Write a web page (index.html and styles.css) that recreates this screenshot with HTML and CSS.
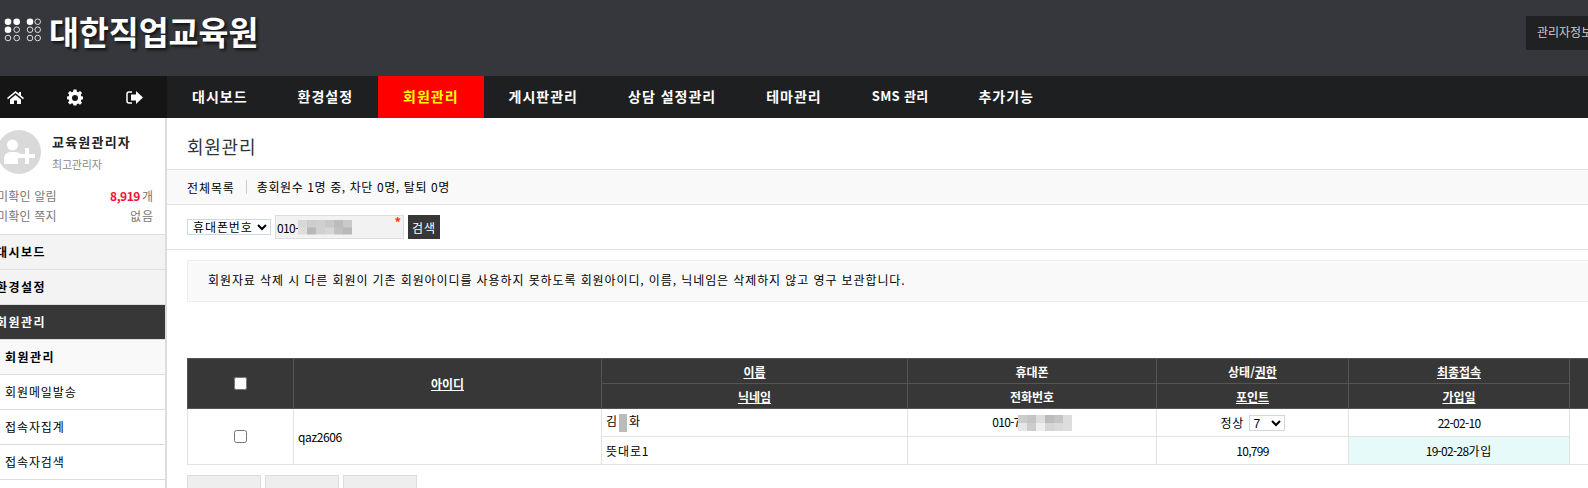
FILE: index.html
```html
<!DOCTYPE html>
<html lang="ko">
<head>
    <meta charset="utf-8">
    <title>회원관리</title>
    <link rel="stylesheet" href="styles.css">
</head>
<body>
    <header class="top">
        <div class="logo">
            <svg class="logo-dots" width="38" height="25" viewBox="0 0 38 25">
                <g fill="#fff">
                    <circle cx="4" cy="3.700" r="3.300"/><circle cx="12.700" cy="3.700" r="3.300"/>
                    <circle cx="4" cy="11.700" r="3.300"/><circle cx="26" cy="3.700" r="3.300"/>
                </g>
                <g fill="none" stroke="#ddd" stroke-width="1">
                    <circle cx="12.700" cy="11.700" r="2.800"/><circle cx="4" cy="20" r="2.800"/><circle cx="12.700" cy="20" r="2.800"/>
                    <circle cx="33.700" cy="3.700" r="2.800"/><circle cx="26" cy="11.700" r="2.800"/><circle cx="33.700" cy="11.700" r="2.800"/>
                    <circle cx="26" cy="20" r="2.800"/><circle cx="33.700" cy="20" r="2.800"/>
                </g>
            </svg>
            <span class="logo-text">대한직업교육원</span>
        </div>
        <a class="admin-info">관리자정보</a>
    </header>

    <nav class="gnb">
        <div class="quick">
            <svg width="17" height="13" viewBox="0 0 17 13"><path fill="#fff" d="M8.500 0 0 7l1 1.200 7.500-6.200L16 8.200 17 7l-3-2.500V1h-2v1.800zM3 8.500l5.500-4.500L14 8.500V13h-4V9.500H7V13H3z"/></svg>
            <svg width="16" height="17" viewBox="0 0 16 16"><path fill="#fff" fill-rule="evenodd" d="M6.500 0h3l.4 2.200 1.300.6L13.100 1.500 15 3.600l-1.300 1.800.6 1.300L16 7v2.800l-1.700.4-.6 1.300 1.300 1.800-2 2-1.800-1.300-1.300.6-.4 1.400h-3l-.4-1.700-1.300-.6-1.800 1.300-2-2 1.300-1.800-.6-1.300L0 9.800V7l1.700-.3.600-1.300L1 3.600l2-2.100 1.800 1.300 1.300-.6zM8 5.400a3 3 0 1 0 0 6 3 3 0 0 0 0-6z"/></svg>
            <svg width="17" height="13" viewBox="0 0 17 13"><path fill="#fff" d="M10 0l7 6.500-7 6.500V9.500H5v-6h5z"/><path fill="none" stroke="#fff" stroke-width="1.500" d="M6 1H3a2 2 0 0 0-2 2v7a2 2 0 0 0 2 2h3"/></svg>
        </div>
        <a class="gnb-item">대시보드</a>
        <a class="gnb-item">환경설정</a>
        <a class="gnb-item on">회원관리</a>
        <a class="gnb-item">게시판관리</a>
        <a class="gnb-item">상담 설정관리</a>
        <a class="gnb-item">테마관리</a>
        <a class="gnb-item sms">SMS 관리</a>
        <a class="gnb-item">추가기능</a>
    </nav>

    <div class="wrap">
        <aside class="side">
            <div class="profile">
                <svg class="avatar" width="44" height="44" viewBox="0 0 44 44">
                    <circle cx="22" cy="22" r="22" fill="#d9d9d9"/>
                    <circle cx="15.500" cy="15" r="5.500" fill="#fff"/>
                    <path fill="#fff" d="M7 34v-5c0-4 3-7 6-7h5c3 0 5 1 6 3v3h-3v6z"/>
                    <path fill="#fff" d="M28 18h4v6h6v4h-6v6h-4v-6h-6v-4h6z"/>
                </svg>
                <div>
                    <div class="profile-name">교육원관리자</div>
                    <div class="profile-role">최고관리자</div>
                </div>
            </div>
            <dl class="counts">
                <div class="count-row"><dt>미확인 알림</dt><dd><b>8,919</b> 개</dd></div>
                <div class="count-row"><dt>미확인 쪽지</dt><dd>없음</dd></div>
            </dl>
            <ul class="side-menu">
                <li class="main-link">대시보드</li>
                <li class="main-link">환경설정</li>
                <li class="main-link active">회원관리</li>
                <li class="sub-link current">회원관리</li>
                <li class="sub-link">회원메일발송</li>
                <li class="sub-link">접속자집계</li>
                <li class="sub-link">접속자검색</li>
            </ul>
        </aside>

        <main class="content">
            <h1 class="page-title">회원관리</h1>
            <div class="local-bar">
                <span>전체목록</span>
                <span class="local-count">총회원수 1명 중, 차단 0명, 탈퇴 0명</span>
            </div>
            <form class="search-bar">
                <select class="search-select"><option>휴대폰번호</option></select>
                <div class="search-input">
                    <span class="num">010-</span><span class="blur blur-input"></span>
                    <i class="required">*</i>
                </div>
                <button type="button" class="search-btn">검색</button>
            </form>
            <div class="notice">회원자료 삭제 시 다른 회원이 기존 회원아이디를 사용하지 못하도록 회원아이디, 이름, 닉네임은 삭제하지 않고 영구 보관합니다.</div>

            <table class="member-table">
                <colgroup>
                    <col class="c-check"><col class="c-id"><col class="c-name"><col class="c-phone"><col class="c-state"><col class="c-date"><col class="c-rest">
                </colgroup>
                <thead>
                    <tr>
                        <th rowspan="2"><input type="checkbox"></th>
                        <th rowspan="2"><a>아이디</a></th>
                        <th><a>이름</a></th>
                        <th>휴대폰</th>
                        <th>상태/<a>권한</a></th>
                        <th><a>최종접속</a></th>
                        <th rowspan="2"></th>
                    </tr>
                    <tr>
                        <th><a>닉네임</a></th>
                        <th>전화번호</th>
                        <th><a>포인트</a></th>
                        <th><a>가입일</a></th>
                    </tr>
                </thead>
                <tbody>
                    <tr>
                        <td rowspan="2" class="center"><input type="checkbox"></td>
                        <td rowspan="2" class="latin">qaz2606</td>
                        <td>김<span class="blur blur-name"></span>화</td>
                        <td class="center"><span class="num">010-7</span><span class="blur blur-phone"></span></td>
                        <td class="center">정상 <select class="level"><option>7</option></select></td>
                        <td class="center num">22-02-10</td>
                        <td rowspan="2"></td>
                    </tr>
                    <tr>
                        <td>뜻대로1</td>
                        <td></td>
                        <td class="center num">10,799</td>
                        <td class="center joined"><span class="num">19-02-28</span>가입</td>
                    </tr>
                </tbody>
            </table>

            <div class="btn-row">
                <span class="ghost-btn"></span>
                <span class="ghost-btn"></span>
                <span class="ghost-btn"></span>
            </div>
        </main>
    </div>
</body>
</html>
```

FILE: styles.css
```css
* {
    box-sizing: border-box;
}
html, body {
    height: 488px;
    margin: 0;
    overflow: hidden;
}
body {
    font-family: "Noto Sans CJK KR", "Liberation Sans", sans-serif;
    font-size: 12px;
    letter-spacing: .9px;
    color: #000;
    background: #fff;
}
a {
    color: inherit;
}
.num {
    letter-spacing: -.7px;
}
.latin {
    letter-spacing: -.4px;
}

.top {
    display: flex;
    justify-content: space-between;
    align-items: flex-start;
    height: 76px;
    background: #36373c;
}
.logo {
    display: flex;
    align-items: center;
    gap: 7px;
    height: 60px;
    padding-left: 4px;
}
.logo-text {
    font-size: 32.500px;
    font-weight: 700;
    letter-spacing: 0;
    color: #fff;
    text-shadow: 2px 2px 3px #111;
}
.admin-info {
    width: 62px;
    height: 34px;
    margin-top: 16px;
    padding-left: 11px;
    overflow: hidden;
    white-space: nowrap;
    line-height: 32px;
    letter-spacing: 0;
    color: #ccc;
    background: #202123;
}

.gnb {
    display: flex;
    height: 42px;
    background: #1e1f21;
}
.quick {
    display: flex;
    justify-content: space-between;
    align-items: center;
    width: 167px;
    padding: 0 24px 0 7px;
    background: #151515;
}
.gnb-item {
    padding: 0 25px;
    line-height: 40px;
    font-size: 14px;
    font-weight: 700;
    letter-spacing: 1px;
    color: #fff;
    white-space: nowrap;
}
.gnb-item.on {
    color: #ff0;
    background: #f00;
}
.gnb-item.sms {
    font-size: 13px;
    letter-spacing: .3px;
}

.wrap {
    display: flex;
    height: 370px;
}
.side {
    flex: none;
    width: 167px;
    overflow: hidden;
    border-right: 2px solid #ddd;
}
.profile {
    display: flex;
    gap: 11px;
    height: 56px;
    margin: 12px 0 0 -3px;
}
.avatar {
    flex: none;
}
.profile-name {
    margin-top: 2px;
    font-size: 13px;
    font-weight: 700;
    letter-spacing: 1.200px;
    color: #222;
}
.profile-role {
    margin-top: 5px;
    font-size: 11px;
    letter-spacing: -.2px;
    color: #888;
}
.counts {
    margin: 0 11px 0 -3px;
    height: 48px;
    color: #777;
}
.count-row {
    display: flex;
    justify-content: space-between;
    height: 20px;
    line-height: 20px;
}
.count-row dt {
    letter-spacing: .2px;
}
.count-row dd {
    margin: 0;
}
.count-row b {
    margin-right: -2px;
    letter-spacing: -.5px;
    color: #f0132f;
}
.side-menu {
    margin: 0;
    padding: 0;
    list-style: none;
    border-top: 1px solid #ddd;
}
.side-menu li {
    height: 35px;
    line-height: 33px;
    border-bottom: 1px solid #ddd;
    white-space: nowrap;
}
.main-link {
    padding-left: 0;
    text-indent: -4px;
    font-weight: 700;
    letter-spacing: 1.500px;
    background: #f3f3f3;
}
.main-link.active {
    color: #fff;
    background: #373737;
}
.sub-link {
    padding-left: 5px;
}
.sub-link.current {
    font-weight: 700;
    letter-spacing: 1.500px;
    background: #f9f9f9;
}

.content {
    flex: none;
    width: 1421px;
    overflow: hidden;
}
.page-title {
    height: 51px;
    margin: 0;
    padding-left: 20px;
    font-size: 18px;
    font-weight: 400;
    letter-spacing: .75px;
    line-height: 56px;
    color: #333;
}
.local-bar {
    display: flex;
    align-items: center;
    height: 36px;
    padding-left: 20px;
    background: #f9f9f9;
    border-top: 1px solid #e2e2e2;
    border-bottom: 1px solid #e2e2e2;
}
.local-count {
    margin-left: 11px;
    padding-left: 10px;
    line-height: 14px;
    letter-spacing: .6px;
    border-left: 1px solid #ccc;
}
.search-bar {
    display: flex;
    align-items: center;
    gap: 4px;
    height: 45px;
    margin: 0;
    padding-left: 20px;
    border-bottom: 1px solid #e2e2e2;
}
.search-select {
    width: 84px;
    height: 16px;
    padding: 0 0 0 1px;
    font-family: "Liberation Sans", "Noto Sans CJK KR", sans-serif;
    font-size: 12px;
    letter-spacing: .9px;
    background: #fff;
    border: 1px solid #ccd9e0;
    border-radius: 0;
}
.search-input {
    position: relative;
    display: flex;
    align-items: center;
    width: 129px;
    height: 24px;
    padding-left: 1px;
    background: #f2f2f2;
    border: 1px solid #ddd;
}
.required {
    position: absolute;
    top: 0;
    right: 1px;
    font-size: 13px;
    font-style: normal;
    font-weight: 700;
    line-height: 12px;
    color: #f30;
}
.search-btn {
    width: 32px;
    height: 24px;
    padding: 0;
    font: inherit;
    letter-spacing: .9px;
    color: #fff;
    background: #373737;
    border: 0;
}

/* mosaic over personal data: two rows of 9px cells */
.blur {
    display: inline-block;
    vertical-align: middle;
    background-repeat: no-repeat;
    background-size: 100% 50%;
}
.blur-input {
    width: 54px;
    height: 15px;
    background-image:
        linear-gradient(90deg, #d8d8d8 9px, #cdcdcd 9px 18px, #d0d0d0 18px 27px, #c8c8c8 27px 36px, #bcbcbc 36px 45px, #c9c9c9 45px),
        linear-gradient(90deg, #ddd 9px, #b8b8b8 9px 18px, #d0d0d0 18px 27px, #d6d6d6 27px 36px, #c0c0c0 36px 45px, #b8b8b8 45px);
    background-position: top, bottom;
}
.blur-name {
    width: 8px;
    height: 18px;
    margin: 0 2px 0 1px;
    background: #bbb;
}
.blur-phone {
    width: 54px;
    height: 16px;
    margin-left: -2px;
    background-image:
        linear-gradient(90deg, #ccc 9px, #c4c4c4 9px 18px, #ddd 18px 27px, #bbb 27px 36px, #c4c4c4 36px 45px, #ddd 45px),
        linear-gradient(90deg, #e5e5e5 9px, #ccc 9px 18px, #eee 18px 27px, #d5d5d5 27px 36px, #d9d9d9 36px 45px, #ddd 45px);
    background-position: top, bottom;
}

.notice {
    width: 1450px;
    height: 42px;
    margin: 10px 0 0 20px;
    padding-left: 20px;
    line-height: 38px;
    background: #f9f9f9;
    border: 1px solid #eee;
}

.member-table {
    width: 1422px;
    margin: 56px 0 0 20px;
    table-layout: fixed;
    border-collapse: collapse;
}
.c-check { width: 106px; }
.c-id { width: 308px; }
.c-name { width: 306px; }
.c-phone { width: 249px; }
.c-state { width: 192px; }
.c-date { width: 221px; }
.c-rest { width: 40px; }
.member-table th {
    height: 25px;
    padding: 0;
    font-size: 12px;
    font-weight: 700;
    letter-spacing: 0;
    color: #fff;
    background: #373737;
    border: 1px solid #555;
}
.member-table th a {
    text-decoration: underline;
}
.member-table th input {
    display: block;
    margin: 0 auto;
}
.member-table td {
    height: 28px;
    padding: 0 4px;
    line-height: 16px;
    border: 1px solid #e2e2e2;
}
.member-table td.center {
    text-align: center;
}
.member-table td input {
    display: block;
    margin: 0 auto;
}
.member-table td.joined {
    background: #e6fafa;
}
.level {
    width: 36px;
    height: 16px;
    padding: 0;
    font-family: "Liberation Sans", sans-serif;
    font-size: 12px;
    background: #fff;
    border: 1px solid #ccd9e0;
    border-radius: 0;
}
.btn-row {
    display: flex;
    gap: 4px;
    margin: 10px 0 0 20px;
}
.ghost-btn {
    width: 74px;
    height: 30px;
    background: #eee;
    border: 1px solid #ddd;
}
```
